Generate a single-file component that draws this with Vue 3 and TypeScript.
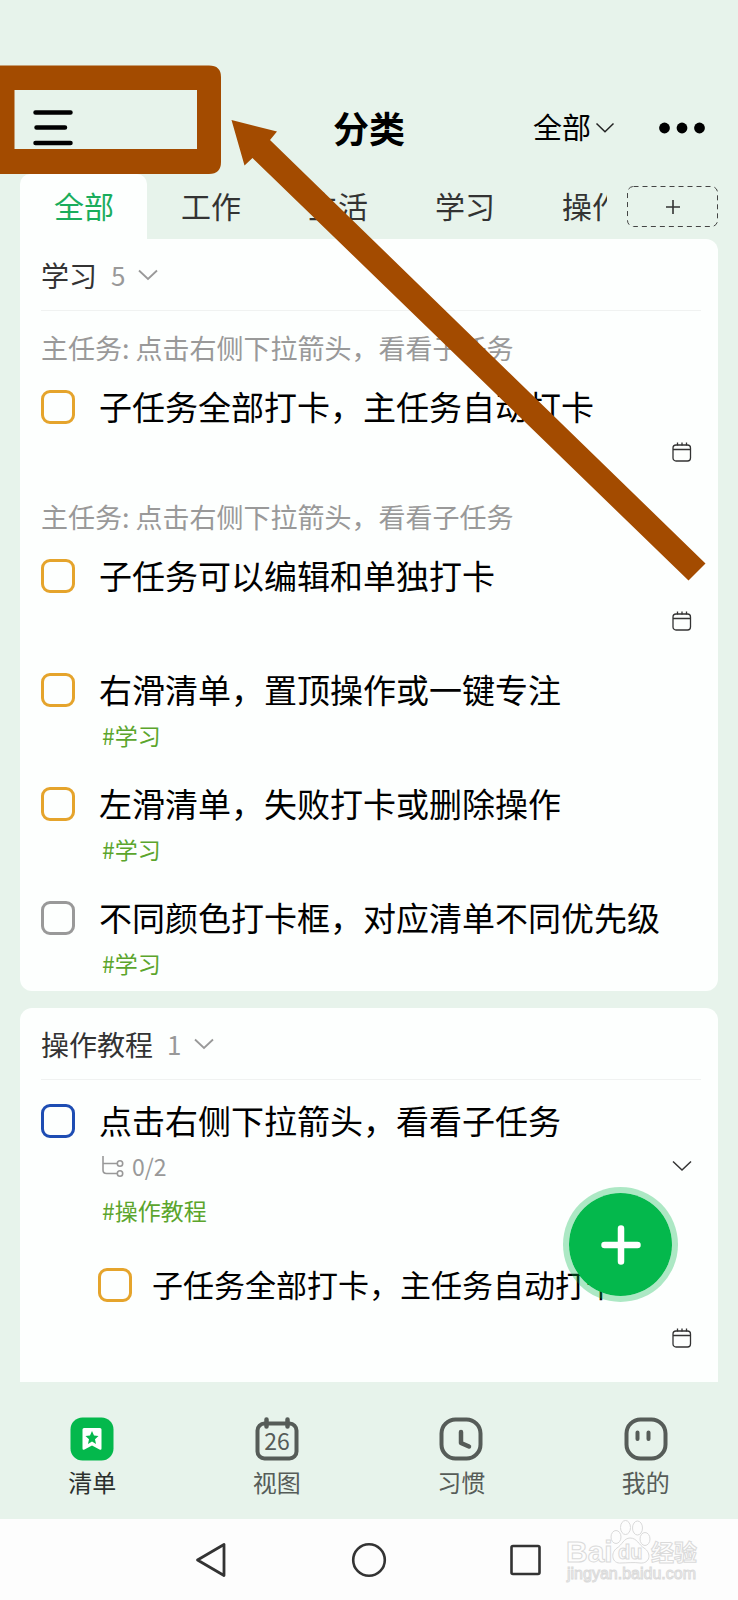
<script setup lang="ts">
import { ref } from 'vue'

interface Task {
  id: string
  title: string
  tone: 'amber' | 'gray' | 'blue'
  parent?: string
  tag?: string
  dated?: boolean
}

const tabs = ['全部', '工作', '生活', '学习', '操作教程']
const activeTab = ref('全部')
const filter = ref('全部')
const activeNav = ref('清单')

const parentTitle = '点击右侧下拉箭头\uFF0C看看子任务'

const studyTasks: Task[] = [
  { id: 's1', title: '子任务全部打卡\uFF0C主任务自动打卡', tone: 'amber', parent: parentTitle, dated: true },
  { id: 's2', title: '子任务可以编辑和单独打卡', tone: 'amber', parent: parentTitle, dated: true },
  { id: 's3', title: '右滑清单\uFF0C置顶操作或一键专注', tone: 'amber', tag: '#学习' },
  { id: 's4', title: '左滑清单\uFF0C失败打卡或删除操作', tone: 'amber', tag: '#学习' },
  { id: 's5', title: '不同颜色打卡框\uFF0C对应清单不同优先级', tone: 'gray', tag: '#学习' },
]

const done = ref<string[]>([])
const navItems = ['清单', '视图', '习惯', '我的']
</script>

<template>
  <div class="app">
    <header class="topbar">
      <button class="plain menu" type="button" aria-label="菜单">
        <svg width="40" height="36" viewBox="0 0 40 36">
          <path d="M2.500 2.500H37.500M3.500 17.500H32M2.500 33H37.500" stroke="#000" stroke-width="4.500" stroke-linecap="round" />
        </svg>
      </button>
      <h1 class="title">分类</h1>
      <div class="actions">
        <label class="filter">
          <select v-model="filter" aria-label="筛选">
            <option>全部</option>
          </select>
          <svg width="20" height="12" viewBox="0 0 20 12"><path d="M1.500 1.500L10 9.800L18.500 1.500" fill="none" stroke="#222" stroke-width="1.500" /></svg>
        </label>
        <button class="plain more" type="button" aria-label="更多">
          <svg width="46" height="12" viewBox="0 0 46 12"><circle cx="5.500" cy="6" r="5.400" /><circle cx="23" cy="6" r="5.400" /><circle cx="40.500" cy="6" r="5.400" /></svg>
        </button>
      </div>
    </header>

    <nav class="tabs" aria-label="分类">
      <div class="strip">
        <button
          v-for="t in tabs"
          :key="t"
          type="button"
          class="plain tab"
          :class="{ active: t === activeTab }"
          @click="activeTab = t"
        >{{ t }}</button>
      </div>
      <button class="plain add-tab" type="button" aria-label="添加分类">
        <svg class="dash" width="100%" height="100%"><rect x="0.500" y="0.500" rx="6" class="dash-rect" /></svg>
        <svg width="14" height="14" viewBox="0 0 14 14"><path d="M7 0V14M0 7H14" stroke="#333" stroke-width="1.600" /></svg>
      </button>
    </nav>

    <main class="content">
      <section class="card first">
        <button class="plain group" type="button" aria-expanded="true">
          <span>学习</span><span class="count">5</span>
          <svg width="20" height="12" viewBox="0 0 20 12"><path d="M1 1.500L10 10L19 1.500" fill="none" stroke="#999" stroke-width="1.800" /></svg>
        </button>
        <ul class="list">
          <li v-for="t in studyTasks" :key="t.id">
            <p v-if="t.parent" class="parent">主任务: {{ t.parent }}</p>
            <label class="task">
              <input v-model="done" type="checkbox" :value="t.id" :class="t.tone" />
              <span>{{ t.title }}</span>
            </label>
            <div class="meta">
              <span v-if="t.tag" class="tag">{{ t.tag }}</span>
              <svg v-if="t.dated" class="end" width="20" height="20" viewBox="0 0 20 20" fill="none" stroke="#333" stroke-width="1.300">
                <rect x="1" y="3" width="17.500" height="16" rx="3" /><path d="M1 7.500H18.500M5.500 0.500V3.500M10 0.500V3.500M14.500 0.500V3.500" />
              </svg>
            </div>
          </li>
        </ul>
      </section>

      <section class="card second">
        <button class="plain group" type="button" aria-expanded="true">
          <span>操作教程</span><span class="count">1</span>
          <svg width="20" height="12" viewBox="0 0 20 12"><path d="M1 1.500L10 10L19 1.500" fill="none" stroke="#999" stroke-width="1.800" /></svg>
        </button>
        <ul class="list">
          <li>
            <label class="task">
              <input v-model="done" type="checkbox" value="g1" class="blue" />
              <span>{{ parentTitle }}</span>
            </label>
            <div class="meta">
              <svg class="branch" width="22" height="21" viewBox="0 0 22 21" fill="none" stroke="#999" stroke-width="1.600">
                <path d="M1 0V14Q1 17.500 4.500 17.500H15M1 7.500H15" /><circle cx="18" cy="7.500" r="2.700" /><circle cx="18" cy="17.500" r="2.700" />
              </svg>
              <span class="progress">0/2</span>
              <button class="plain end" type="button" aria-label="展开子任务">
                <svg width="20" height="12" viewBox="0 0 20 12"><path d="M1 1.500L10 10L19 1.500" fill="none" stroke="#333" stroke-width="1.500" /></svg>
              </button>
            </div>
            <div class="meta short"><span class="tag">#操作教程</span></div>
            <ul class="sublist">
              <li>
                <label class="task sub">
                  <input v-model="done" type="checkbox" value="g2" class="amber" />
                  <span>{{ studyTasks[0].title }}</span>
                </label>
                <div class="meta tall">
                  <svg class="end" width="20" height="20" viewBox="0 0 20 20" fill="none" stroke="#333" stroke-width="1.300">
                    <rect x="1" y="3" width="17.500" height="16" rx="3" /><path d="M1 7.500H18.500M5.500 0.500V3.500M10 0.500V3.500M14.500 0.500V3.500" />
                  </svg>
                </div>
              </li>
            </ul>
          </li>
        </ul>
      </section>

      <button class="plain fab" type="button" aria-label="新建">
        <svg width="40" height="40" viewBox="0 0 40 40"><path d="M20 3.500V36.500M3.500 20H36.500" stroke="#fff" stroke-width="6.500" stroke-linecap="round" /></svg>
      </button>
    </main>

    <nav class="bottom" aria-label="主导航">
      <button
        v-for="n in navItems"
        :key="n"
        type="button"
        class="plain nav-item"
        :class="{ active: n === activeNav }"
        @click="activeNav = n"
      >
        <svg v-if="n === '清单'" width="44" height="44" viewBox="0 0 44 44">
          <rect x="0.500" y="0.500" width="43" height="43" rx="12" fill="#04b84c" />
          <path d="M14 11H30Q31.500 11 31.500 12.500V31.500Q31.500 33.500 29.500 32.500L22 28.500L14.500 32.500Q12.500 33.500 12.500 31.500V12.500Q12.500 11 14 11Z" fill="#fff" />
          <path d="M22 14L24 18.500L28.500 19L25 22.200L26 27L22 24.500L18 27L19 22.200L15.500 19L20 18.500Z" fill="#04b84c" />
        </svg>
        <svg v-else-if="n === '视图'" width="44" height="44" viewBox="0 0 44 44" fill="none" stroke="#565c58">
          <rect x="2.500" y="6.500" width="39" height="35" rx="7" stroke-width="4" />
          <path d="M11.500 2.500V9.500M32.500 2.500V9.500" stroke-width="4.500" stroke-linecap="round" />
          <text x="22" y="33" text-anchor="middle" class="day" stroke="none" fill="#565c58">26</text>
        </svg>
        <svg v-else-if="n === '习惯'" width="44" height="44" viewBox="0 0 44 44" fill="none" stroke="#565c58" stroke-width="4" stroke-linecap="round" stroke-linejoin="round">
          <rect x="2.500" y="2.500" width="39" height="39" rx="14" /><path d="M22 15V26L30 29.500" stroke-width="4.500" />
        </svg>
        <svg v-else width="44" height="44" viewBox="0 0 44 44" fill="none" stroke="#565c58" stroke-width="4" stroke-linecap="round">
          <rect x="2.500" y="2.500" width="39" height="39" rx="14" /><path d="M13.500 15.500V22M24.500 15.500V22" />
        </svg>
        <span>{{ n }}</span>
      </button>
    </nav>

    <footer class="system">
      <button class="plain" type="button" aria-label="返回">
        <svg width="36" height="36" viewBox="0 0 36 36" fill="none" stroke="#333" stroke-width="2.800" stroke-linejoin="round"><path d="M3.500 18L30 2.500V33.500Z" /></svg>
      </button>
      <button class="plain" type="button" aria-label="主页">
        <svg width="36" height="36" viewBox="0 0 36 36" fill="none" stroke="#333" stroke-width="2.600"><circle cx="18" cy="18" r="15.800" /></svg>
      </button>
      <button class="plain" type="button" aria-label="最近任务">
        <svg width="36" height="36" viewBox="0 0 36 36" fill="none" stroke="#333" stroke-width="2.600"><rect x="3.500" y="4" width="28" height="28" rx="1.500" /></svg>
      </button>
      <svg class="mark" width="136" height="68" viewBox="0 0 136 68" fill="#fdfdfd" stroke="#dadada" stroke-width="1">
        <text x="2" y="43" class="mark-bold">Bai</text>
        <ellipse cx="52" cy="18" rx="5" ry="6.500" /><ellipse cx="61.500" cy="8.500" rx="5" ry="7" /><ellipse cx="73.500" cy="9" rx="5" ry="7" /><ellipse cx="81" cy="20" rx="5" ry="6.500" />
        <path d="M66 19C60 19 58 26 53 29C46 34 48 45 57 44C62 44 70 43 76 44C86 45 88 34 80 29C75 26 73 19 66 19Z" />
        <text x="54" y="40" class="mark-du">du</text>
        <text x="87" y="42" class="mark-cjk">经验</text>
        <text x="3" y="60" class="mark-url">jingyan.baidu.com</text>
      </svg>
    </footer>

    <svg class="callout" width="738" height="600" viewBox="0 0 738 600" aria-hidden="true">
      <path fill-rule="evenodd" d="M0 65.500H209Q221 65.500 221 77V162Q221 174 209 174H0ZM14.500 90V149H197V90Z" />
      <path d="M231.500 120L277 131.500L270 140L705.500 563.500L688.500 580.500L252.500 158L244.500 165.500Z" />
    </svg>
  </div>
</template>

<style>
body {
  margin: 0;
  background: #e7f3eb;
}
</style>

<style scoped>
.app {
  position: relative;
  overflow: hidden;
  background: #e7f3eb;
  color: #000;
  font-family: "Noto Sans CJK SC", sans-serif;
}
.plain {
  margin: 0;
  padding: 0;
  border: 0;
  background: none;
  color: inherit;
  font: inherit;
  cursor: pointer;
}
svg {
  display: block;
  flex: none;
}
ul,
p,
h1 {
  margin: 0;
  padding: 0;
  list-style: none;
}
.topbar {
  display: grid;
  grid-template-columns: 1fr auto 1fr;
  align-items: center;
  height: 92px;
  padding: 82px 33px 0;
}
.menu {
  justify-self: start;
}
.title {
  padding-bottom: 3px;
  font-size: 36px;
  line-height: 48px;
  font-weight: 700;
}
.actions {
  display: flex;
  justify-content: flex-end;
  align-items: center;
  gap: 44px;
}
.filter {
  display: flex;
  align-items: center;
  gap: 3px;
}
.filter select {
  appearance: none;
  margin: 0;
  padding: 0 0 4px;
  border: 0;
  background: none;
  color: #000;
  font-family: inherit;
  font-size: 29px;
  line-height: 44px;
}
.tabs {
  display: flex;
  align-items: center;
  gap: 20px;
  padding: 0 20px;
}
.strip {
  display: flex;
  flex: 1;
  min-width: 0;
  overflow: hidden;
}
.tab {
  flex: none;
  height: 65px;
  padding: 0 33px 4px 34px;
  border-radius: 10px 10px 0 0;
  color: #333;
  font-size: 30px;
  line-height: 44px;
  white-space: nowrap;
}
.tab.active {
  background: #fdfffe;
  color: #1aad5c;
}
.add-tab {
  position: relative;
  display: flex;
  flex: none;
  align-items: center;
  justify-content: center;
  width: 91px;
  height: 41px;
}
.dash {
  position: absolute;
  inset: 0;
}
.dash-rect {
  width: calc(100% - 1px);
  height: calc(100% - 1px);
  fill: none;
  stroke: #444;
  stroke-dasharray: 5 4;
}
.content {
  position: relative;
  display: flex;
  flex-direction: column;
  gap: 17px;
  padding: 0 20px;
}
.card {
  padding: 0 17px 5px 21px;
  background: #fdfffe;
}
.first {
  border-radius: 0 12px 12px 12px;
}
.second {
  padding-bottom: 13px;
  border-radius: 12px 12px 0 0;
}
.group {
  display: flex;
  align-items: center;
  width: 100%;
  height: 72px;
  border-bottom: 1px solid #f0f2f1;
  color: #333;
  font-size: 28px;
  line-height: 40px;
}
.count {
  margin: 0 13px 0 14px;
  color: #999;
  font-size: 26px;
}
.list {
  display: flex;
  flex-direction: column;
  gap: 24px;
  padding-top: 19px;
}
.parent {
  margin-bottom: 19px;
  color: #999;
  font-size: 27px;
  line-height: 36px;
  white-space: nowrap;
}
.task {
  display: flex;
  align-items: center;
  gap: 24px;
  height: 44px;
  font-size: 33px;
  line-height: 44px;
  white-space: nowrap;
}
.task span {
  padding-bottom: 2px;
}
.task input {
  appearance: none;
  flex: none;
  width: 34px;
  height: 34px;
  margin: 0;
  border: 3px solid #e5a42c;
  border-radius: 9px;
}
.task input.gray {
  border-color: #999;
}
.task input.blue {
  border-color: #1e4db3;
}
.meta {
  display: flex;
  align-items: center;
  height: 46px;
  padding: 0 9px 0 61px;
  font-size: 23px;
  line-height: 32px;
}
.short {
  height: 42px;
}
.tag {
  color: #5ba52c;
}
.branch {
  margin-right: 8px;
}
.progress {
  color: #999;
}
.end {
  margin-left: auto;
}
.sublist {
  padding-top: 32px;
}
.sub {
  gap: 20px;
  padding-left: 57px;
  font-size: 31px;
}
.tall {
  height: 62px;
}
.fab {
  position: absolute;
  right: 60px;
  bottom: 80px;
  display: flex;
  align-items: center;
  justify-content: center;
  width: 115px;
  height: 115px;
  border: 6px solid rgba(4, 184, 76, 0.32);
  border-radius: 50%;
  background: #04b84c;
  background-clip: padding-box;
}
.bottom {
  display: grid;
  grid-template-columns: repeat(4, 1fr);
  height: 102px;
  padding-top: 35px;
}
.nav-item {
  display: flex;
  flex-direction: column;
  align-items: center;
  gap: 5px;
  color: #565c58;
  font-size: 24px;
  line-height: 32px;
}
.nav-item.active {
  color: #2b302d;
}
.day {
  font-size: 23px;
}
.system {
  position: relative;
  display: flex;
  align-items: center;
  justify-content: center;
  gap: 121px;
  height: 81px;
  background: #fdfdfd;
}
.mark {
  position: absolute;
  right: 38px;
  top: 0;
}
.mark-bold {
  font: 700 30px "Liberation Sans", sans-serif;
}
.mark-du {
  font: 700 20px "Liberation Sans", sans-serif;
}
.mark-cjk {
  font: 700 23px "Noto Sans CJK SC", sans-serif;
}
.mark-url {
  font: 16px "Liberation Sans", sans-serif;
}
.callout {
  position: absolute;
  top: 0;
  left: 0;
  fill: #a34b00;
  pointer-events: none;
}
</style>
